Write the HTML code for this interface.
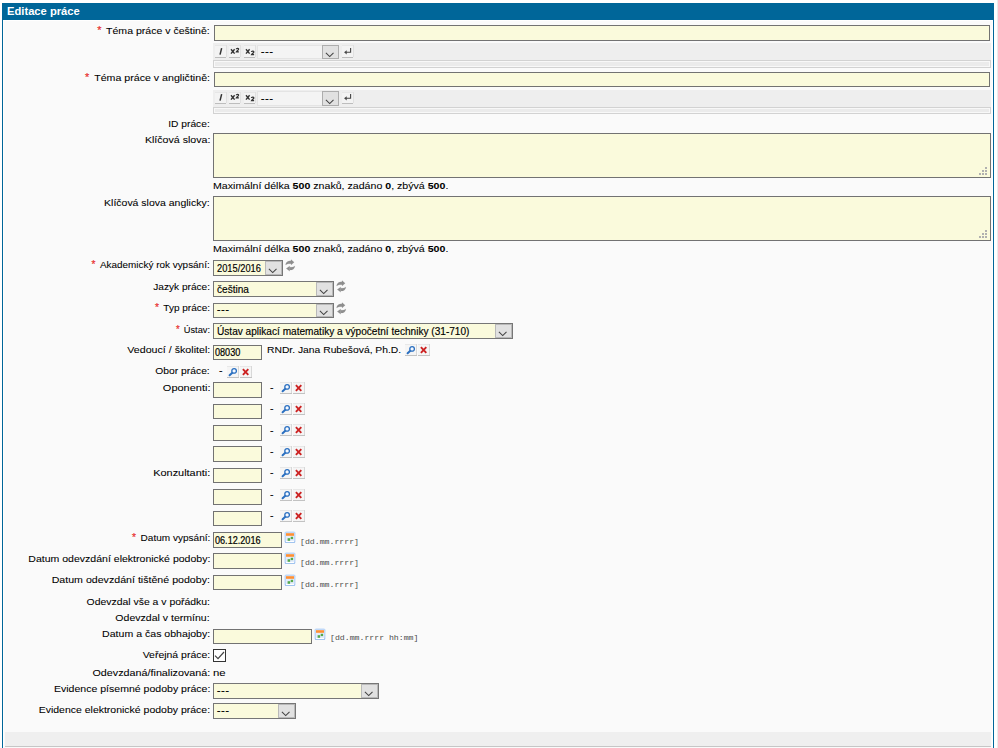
<!DOCTYPE html>
<html><head><meta charset="utf-8"><title>Editace práce</title>
<style>
html,body{margin:0;padding:0;background:#fff;overflow:hidden;}
body{width:998px;height:748px;position:relative;overflow:hidden;font-family:"Liberation Sans",sans-serif;font-size:9.8px;color:#000;}
#frame{position:absolute;left:2px;top:3px;width:990px;height:745px;border:1px solid #006699;border-bottom:none;background:#fff;}
#hd{position:absolute;left:2px;top:3px;width:992px;height:17px;background:#006699;color:#fff;font-weight:bold;font-size:11.2px;line-height:17px;}
#hd span{position:absolute;left:5px;top:0;}
#bg{position:absolute;left:4px;top:21px;width:988px;height:727px;background:#fafafa;}
#foot{position:absolute;left:5px;top:732px;width:986px;height:14px;background:#efefef;border-bottom:1px solid #c6c6c6;}
#redge{position:absolute;left:997px;top:0;width:1px;height:748px;background:#ececec;}
.lb,.t{-webkit-text-stroke:0.06px #000;}
.lb{position:absolute;left:0;width:210px;text-align:right;white-space:nowrap;line-height:13px;height:13px;}
.lx{display:inline-block;transform-origin:100% 50%;}
.rq{color:#e83030;margin-right:4.4px;font-size:10px;position:relative;top:0.4px;-webkit-text-stroke:0.2px #e83030;}
.t,.mono{position:absolute;white-space:nowrap;line-height:13px;height:13px;}
.mono{font-family:"Liberation Mono",monospace;font-size:8.2px;color:#4a4a4a;margin-top:0.5px;transform:scaleY(0.8);transform-origin:0 10px;}
.in{position:absolute;box-sizing:border-box;border:1px solid #727272;background:#fafadc;white-space:nowrap;overflow:hidden;}
.in .iv{position:absolute;left:1px;bottom:0.5px;-webkit-text-stroke:0.2px #000;font-size:10px;line-height:13px;transform:scaleX(0.91);transform-origin:0 50%;}
.sel{position:absolute;box-sizing:border-box;border:1px solid #767676;background:#fafadc;white-space:nowrap;overflow:hidden;}
.sel .sv{position:absolute;left:3px;bottom:0px;-webkit-text-stroke:0.15px #000;font-size:10.1px;line-height:13px;}
.sel .num{font-size:10px;transform:scaleX(0.93);transform-origin:0 50%;}
.sel .ar{position:absolute;right:0;top:0;bottom:0;width:17px;background:#e1e1e1;box-shadow:inset 0 0 0 1px #b9b9b9;}
.sel .ar svg{position:absolute;left:3px;bottom:1px;}
.sel .dash{letter-spacing:0.9px;margin-bottom:1px;-webkit-text-stroke:0.3px #000;}
.tsel{background:#f4f4f4;border-color:#e4e4e4;overflow:visible;}
.tsel .sv{bottom:-0.5px;}
.tsel .ar{right:-1px;top:-1px;bottom:-1px;border:1px solid #adadad;box-sizing:border-box;box-shadow:none;}
.tsel .ar svg{left:2.2px;bottom:0.5px;}
.tb{position:absolute;left:213px;width:778px;height:17px;background:#eeeeee;}
.bar{position:absolute;left:213px;width:778px;height:7px;box-sizing:border-box;border:1px solid #d2d2d2;background:#ebebeb;box-shadow:inset 0 0 0 1px #f8f8f8;}
.tbtn{position:absolute;width:11px;height:12px;background:#f3f3f3;box-shadow:inset 0 1px 0 #e6e6e6, 0 1px 0 #bdbdbd, 1px 0 0 #e0e0e0;color:#333;font-weight:bold;}
.tbtn svg{position:absolute;left:0;top:0;}
.bi{position:absolute;left:4px;top:0.3px;font-style:italic;font-size:9px;line-height:12px;}
.bx{position:absolute;left:1.5px;top:-0.2px;font-size:9.5px;line-height:12px;}
.s2{position:absolute;left:7.2px;font-size:5.6px;line-height:7px;}
.sup{top:2.5px;} .sub{top:5.3px;}
.ib{position:absolute;width:12px;height:12px;background:#f5f5f5;box-shadow:inset 0 -1px 0 #c2c2c2, inset -1px 0 0 #d8d8d8, inset 0 1px 0 #e8e8e8;}
.ib svg{position:absolute;left:0;top:0;}
.abs{position:absolute;}
.cal{position:absolute;width:11px;height:11px;box-sizing:border-box;border:1px solid #a9c8ee;background:#fdfdff;border-radius:2px;}
.cal i{position:absolute;left:1px;top:1px;width:7px;height:2px;background:#f39436;}
.cal b{position:absolute;left:2px;top:5px;width:2px;height:2px;background:#5db24d;}
.cal u{position:absolute;left:5px;top:4px;width:2px;height:2px;background:#5db24d;}
.cb{position:absolute;width:13px;height:13px;box-sizing:border-box;border:1px solid #333;background:#fff;}
.cb svg{position:absolute;left:-1px;top:-1px;}
.gd{position:absolute;width:2px;height:2px;background:#b0b0b0;}
</style></head>
<body>
<div id="frame"></div>
<div id="bg"></div>
<div id="hd"><span>Editace práce</span></div>
<div id="foot"></div>
<div id="redge"></div>
<div class="lb" style="top:24px"><span class="lx" style="transform:scaleX(1.0750)"><span class="rq">*</span>Téma práce v češtině:</span></div>
<div class="in" style="left:214px;top:25px;width:776px;height:16px"><span class="iv"></span></div>
<div class="tb" style="top:43px"></div>
<div class="tbtn" style="left:215px;top:45px;height:12px;"><svg style="" width="12" height="12" viewBox="0 0 12 12"><path d="M6.65 3.1 L5.05 9.6" stroke="#333" stroke-width="1.5" fill="none"/></svg></div>
<div class="tbtn" style="left:229px;top:45px;height:12px;"><svg style="" width="12" height="12" viewBox="0 0 12 12"><path d="M2 4.2 L5.6 8.6 M5.6 4.2 L2 8.6" stroke="#333" stroke-width="1.4" fill="none"/><path d="M7.25 4.3 C7.3 3.0 9.7 3.0 9.6 4.3 C9.5 5.3 7.7 5.9 7.3 6.9 L9.9 6.9" stroke="#333" stroke-width="1.25" fill="none"/></svg></div>
<div class="tbtn" style="left:244px;top:45px;height:12px;"><svg style="" width="12" height="12" viewBox="0 0 12 12"><path d="M2 4.2 L5.6 8.6 M5.6 4.2 L2 8.6" stroke="#333" stroke-width="1.4" fill="none"/><g transform="translate(0.2,2.8)"><path d="M7.25 4.3 C7.3 3.0 9.7 3.0 9.6 4.3 C9.5 5.3 7.7 5.9 7.3 6.9 L9.9 6.9" stroke="#333" stroke-width="1.25" fill="none"/></g></svg></div>
<div class="sel tsel" style="left:257px;top:45px;width:82px;height:14px"><span class="sv dash">---</span><span class="ar"><svg width="10" height="6" viewBox="0 0 10 6"><path d="M0.9 0.8 L4.7 4.6 L8.5 0.8" fill="none" stroke="#444" stroke-width="1.05"/></svg></span></div>
<div class="tbtn" style="left:342px;top:45px;height:12px;"><svg style="" width="12" height="12" viewBox="0 0 12 12"><path d="M8.6 3.0 V7.3 H4" fill="none" stroke="#444" stroke-width="1.1"/><path d="M2.1 7.3 L4.7 5.2 L4.7 9.4 Z" fill="#444"/></svg></div>
<div class="bar" style="top:60px;height:8px"></div>
<div class="lb" style="top:71px"><span class="lx" style="transform:scaleX(1.0859)"><span class="rq">*</span>Téma práce v angličtině:</span></div>
<div class="in" style="left:214px;top:72px;width:776px;height:15px"><span class="iv"></span></div>
<div class="tb" style="top:90px"></div>
<div class="tbtn" style="left:215px;top:92px;height:11px;"><svg style="margin-top:-0.6px;" width="12" height="12" viewBox="0 0 12 12"><path d="M6.65 3.1 L5.05 9.6" stroke="#333" stroke-width="1.5" fill="none"/></svg></div>
<div class="tbtn" style="left:229px;top:92px;height:11px;"><svg style="margin-top:-0.6px;" width="12" height="12" viewBox="0 0 12 12"><path d="M2 4.2 L5.6 8.6 M5.6 4.2 L2 8.6" stroke="#333" stroke-width="1.4" fill="none"/><path d="M7.25 4.3 C7.3 3.0 9.7 3.0 9.6 4.3 C9.5 5.3 7.7 5.9 7.3 6.9 L9.9 6.9" stroke="#333" stroke-width="1.25" fill="none"/></svg></div>
<div class="tbtn" style="left:244px;top:92px;height:11px;"><svg style="margin-top:-0.6px;" width="12" height="12" viewBox="0 0 12 12"><path d="M2 4.2 L5.6 8.6 M5.6 4.2 L2 8.6" stroke="#333" stroke-width="1.4" fill="none"/><g transform="translate(0.2,2.8)"><path d="M7.25 4.3 C7.3 3.0 9.7 3.0 9.6 4.3 C9.5 5.3 7.7 5.9 7.3 6.9 L9.9 6.9" stroke="#333" stroke-width="1.25" fill="none"/></g></svg></div>
<div class="sel tsel" style="left:257px;top:91px;width:82px;height:15px"><span class="sv dash">---</span><span class="ar"><svg width="10" height="6" viewBox="0 0 10 6"><path d="M0.9 0.8 L4.7 4.6 L8.5 0.8" fill="none" stroke="#444" stroke-width="1.05"/></svg></span></div>
<div class="tbtn" style="left:342px;top:92px;height:11px;"><svg style="margin-top:-0.6px;" width="12" height="12" viewBox="0 0 12 12"><path d="M8.6 3.0 V7.3 H4" fill="none" stroke="#444" stroke-width="1.1"/><path d="M2.1 7.3 L4.7 5.2 L4.7 9.4 Z" fill="#444"/></svg></div>
<div class="bar" style="top:107px;height:7px"></div>
<div class="lb" style="top:117px"><span class="lx" style="transform:scaleX(1.0433)">ID práce:</span></div>
<div class="lb" style="top:133px"><span class="lx" style="transform:scaleX(1.0846)">Klíčová slova:</span></div>
<div class="in ta" style="left:213px;top:133px;width:778px;height:45px"></div>
<div class="gd" style="left:979px;top:173px"></div>
<div class="gd" style="left:982px;top:173px"></div>
<div class="gd" style="left:985px;top:173px"></div>
<div class="gd" style="left:982px;top:170px"></div>
<div class="gd" style="left:985px;top:170px"></div>
<div class="gd" style="left:985px;top:167px"></div>
<div class="t" style="left:213px;top:179px;transform:scaleX(1.083);transform-origin:0 50%;">Maximální délka <b>500</b> znaků, zadáno <b>0</b>, zbývá <b>500</b>.</div>
<div class="lb" style="top:196px"><span class="lx" style="transform:scaleX(1.0703)">Klíčová slova anglicky:</span></div>
<div class="in ta" style="left:213px;top:196px;width:778px;height:45px"></div>
<div class="gd" style="left:979px;top:236px"></div>
<div class="gd" style="left:982px;top:236px"></div>
<div class="gd" style="left:985px;top:236px"></div>
<div class="gd" style="left:982px;top:233px"></div>
<div class="gd" style="left:985px;top:233px"></div>
<div class="gd" style="left:985px;top:230px"></div>
<div class="t" style="left:213px;top:242px;transform:scaleX(1.083);transform-origin:0 50%;">Maximální délka <b>500</b> znaků, zadáno <b>0</b>, zbývá <b>500</b>.</div>
<div class="lb" style="top:258px"><span class="lx" style="transform:scaleX(1.0128)"><span class="rq">*</span>Akademický rok vypsání:</span></div>
<div class="sel" style="left:213px;top:260px;width:70px;height:16px"><span class="sv num">2015/2016</span><span class="ar"><svg width="10" height="6" viewBox="0 0 10 6"><path d="M0.9 0.8 L4.7 4.6 L8.5 0.8" fill="none" stroke="#444" stroke-width="1.05"/></svg></span></div>
<svg class="abs" style="left:285px;top:259px" width="11" height="13" viewBox="0 0 11 13"><g fill="#8f8f8f" stroke="#8f8f8f" stroke-width="0.1"><path d="M6.0 0.6 L9.2 3.3 L6.0 5.9 Z"/><path d="M0.5 6.0 C0.8 3.0 3.2 1.6 6.2 1.8 L6.2 4.8 C3.8 4.6 2 5 0.5 6.0 Z"/><path d="M4.7 6.9 L1.2 9.5 L4.7 12.2 Z"/><path d="M10 6.9 C9.7 9.9 7.3 11.3 4.5 11.1 L4.5 8.1 C6.7 8.3 8.5 7.9 10 6.9 Z"/></g></svg>
<div class="lb" style="top:280px"><span class="lx" style="transform:scaleX(1.0308)">Jazyk práce:</span></div>
<div class="sel" style="left:213px;top:281px;width:121px;height:16px"><span class="sv">čeština</span><span class="ar"><svg width="10" height="6" viewBox="0 0 10 6"><path d="M0.9 0.8 L4.7 4.6 L8.5 0.8" fill="none" stroke="#444" stroke-width="1.05"/></svg></span></div>
<svg class="abs" style="left:336px;top:280px" width="11" height="13" viewBox="0 0 11 13"><g fill="#8f8f8f" stroke="#8f8f8f" stroke-width="0.1"><path d="M6.0 0.6 L9.2 3.3 L6.0 5.9 Z"/><path d="M0.5 6.0 C0.8 3.0 3.2 1.6 6.2 1.8 L6.2 4.8 C3.8 4.6 2 5 0.5 6.0 Z"/><path d="M4.7 6.9 L1.2 9.5 L4.7 12.2 Z"/><path d="M10 6.9 C9.7 9.9 7.3 11.3 4.5 11.1 L4.5 8.1 C6.7 8.3 8.5 7.9 10 6.9 Z"/></g></svg>
<div class="lb" style="top:301px"><span class="lx" style="transform:scaleX(1.0203)"><span class="rq">*</span>Typ práce:</span></div>
<div class="sel" style="left:213px;top:303px;width:121px;height:15px"><span class="sv dash">---</span><span class="ar"><svg width="10" height="6" viewBox="0 0 10 6"><path d="M0.9 0.8 L4.7 4.6 L8.5 0.8" fill="none" stroke="#444" stroke-width="1.05"/></svg></span></div>
<svg class="abs" style="left:336px;top:302px" width="11" height="13" viewBox="0 0 11 13"><g fill="#8f8f8f" stroke="#8f8f8f" stroke-width="0.1"><path d="M6.0 0.6 L9.2 3.3 L6.0 5.9 Z"/><path d="M0.5 6.0 C0.8 3.0 3.2 1.6 6.2 1.8 L6.2 4.8 C3.8 4.6 2 5 0.5 6.0 Z"/><path d="M4.7 6.9 L1.2 9.5 L4.7 12.2 Z"/><path d="M10 6.9 C9.7 9.9 7.3 11.3 4.5 11.1 L4.5 8.1 C6.7 8.3 8.5 7.9 10 6.9 Z"/></g></svg>
<div class="lb" style="top:323px"><span class="lx" style="transform:scaleX(0.9478)"><span class="rq">*</span>Ústav:</span></div>
<div class="sel" style="left:213px;top:323px;width:300px;height:16px"><span class="sv">Ústav aplikací matematiky a výpočetní techniky (31-710)</span><span class="ar"><svg width="10" height="6" viewBox="0 0 10 6"><path d="M0.9 0.8 L4.7 4.6 L8.5 0.8" fill="none" stroke="#444" stroke-width="1.05"/></svg></span></div>
<div class="lb" style="top:343px"><span class="lx" style="transform:scaleX(1.0878)">Vedoucí / školitel:</span></div>
<div class="in" style="left:213px;top:345px;width:49px;height:15px"><span class="iv">08030</span></div>
<div class="t" style="left:267px;top:343px;transform:scaleX(1.053);transform-origin:0 50%;">RNDr. Jana Rubešová, Ph.D.</div>
<div class="ib" style="left:405px;top:344px"><svg width="12" height="12" viewBox="0 0 12 12"><path d="M5.6 6.4 L2.6 9.2" stroke="#2a6fc0" stroke-width="2" stroke-linecap="round"/><circle cx="7.1" cy="4.9" r="2.3" fill="#f4f8ff" stroke="#2a6fc0" stroke-width="1.3"/></svg></div>
<div class="ib" style="left:418px;top:344px"><svg width="12" height="12" viewBox="0 0 12 12"><path d="M2.9 3.2 L8.3 8.8 M8.3 3.2 L2.9 8.8" stroke="#cc2222" stroke-width="1.9"/></svg></div>
<div class="lb" style="top:364px"><span class="lx" style="transform:scaleX(1.0517)">Obor práce:</span></div>
<div class="t" style="left:219px;top:364px;transform:scaleX(1.075);transform-origin:0 50%;">-</div>
<div class="ib" style="left:227px;top:366px"><svg width="12" height="12" viewBox="0 0 12 12"><path d="M5.6 6.4 L2.6 9.2" stroke="#2a6fc0" stroke-width="2" stroke-linecap="round"/><circle cx="7.1" cy="4.9" r="2.3" fill="#f4f8ff" stroke="#2a6fc0" stroke-width="1.3"/></svg></div>
<div class="ib" style="left:240px;top:366px"><svg width="12" height="12" viewBox="0 0 12 12"><path d="M2.9 3.2 L8.3 8.8 M8.3 3.2 L2.9 8.8" stroke="#cc2222" stroke-width="1.9"/></svg></div>
<div class="lb" style="top:381px"><span class="lx" style="transform:scaleX(1.1208)">Oponenti:</span></div>
<div class="in" style="left:213px;top:382px;width:49px;height:16px"><span class="iv"></span></div>
<div class="t" style="left:270px;top:381px;transform:scaleX(1.075);transform-origin:0 50%;">-</div>
<div class="ib" style="left:280px;top:382px"><svg width="12" height="12" viewBox="0 0 12 12"><path d="M5.6 6.4 L2.6 9.2" stroke="#2a6fc0" stroke-width="2" stroke-linecap="round"/><circle cx="7.1" cy="4.9" r="2.3" fill="#f4f8ff" stroke="#2a6fc0" stroke-width="1.3"/></svg></div>
<div class="ib" style="left:293px;top:382px"><svg width="12" height="12" viewBox="0 0 12 12"><path d="M2.9 3.2 L8.3 8.8 M8.3 3.2 L2.9 8.8" stroke="#cc2222" stroke-width="1.9"/></svg></div>
<div class="in" style="left:213px;top:404px;width:49px;height:15px"><span class="iv"></span></div>
<div class="t" style="left:270px;top:402px;transform:scaleX(1.075);transform-origin:0 50%;">-</div>
<div class="ib" style="left:280px;top:403px"><svg width="12" height="12" viewBox="0 0 12 12"><path d="M5.6 6.4 L2.6 9.2" stroke="#2a6fc0" stroke-width="2" stroke-linecap="round"/><circle cx="7.1" cy="4.9" r="2.3" fill="#f4f8ff" stroke="#2a6fc0" stroke-width="1.3"/></svg></div>
<div class="ib" style="left:293px;top:403px"><svg width="12" height="12" viewBox="0 0 12 12"><path d="M2.9 3.2 L8.3 8.8 M8.3 3.2 L2.9 8.8" stroke="#cc2222" stroke-width="1.9"/></svg></div>
<div class="in" style="left:213px;top:425px;width:49px;height:16px"><span class="iv"></span></div>
<div class="t" style="left:270px;top:424px;transform:scaleX(1.075);transform-origin:0 50%;">-</div>
<div class="ib" style="left:280px;top:424px"><svg width="12" height="12" viewBox="0 0 12 12"><path d="M5.6 6.4 L2.6 9.2" stroke="#2a6fc0" stroke-width="2" stroke-linecap="round"/><circle cx="7.1" cy="4.9" r="2.3" fill="#f4f8ff" stroke="#2a6fc0" stroke-width="1.3"/></svg></div>
<div class="ib" style="left:293px;top:424px"><svg width="12" height="12" viewBox="0 0 12 12"><path d="M2.9 3.2 L8.3 8.8 M8.3 3.2 L2.9 8.8" stroke="#cc2222" stroke-width="1.9"/></svg></div>
<div class="in" style="left:213px;top:446px;width:49px;height:16px"><span class="iv"></span></div>
<div class="t" style="left:270px;top:445px;transform:scaleX(1.075);transform-origin:0 50%;">-</div>
<div class="ib" style="left:280px;top:446px"><svg width="12" height="12" viewBox="0 0 12 12"><path d="M5.6 6.4 L2.6 9.2" stroke="#2a6fc0" stroke-width="2" stroke-linecap="round"/><circle cx="7.1" cy="4.9" r="2.3" fill="#f4f8ff" stroke="#2a6fc0" stroke-width="1.3"/></svg></div>
<div class="ib" style="left:293px;top:446px"><svg width="12" height="12" viewBox="0 0 12 12"><path d="M2.9 3.2 L8.3 8.8 M8.3 3.2 L2.9 8.8" stroke="#cc2222" stroke-width="1.9"/></svg></div>
<div class="lb" style="top:466px"><span class="lx" style="transform:scaleX(1.1112)">Konzultanti:</span></div>
<div class="in" style="left:213px;top:468px;width:49px;height:15px"><span class="iv"></span></div>
<div class="t" style="left:270px;top:466px;transform:scaleX(1.075);transform-origin:0 50%;">-</div>
<div class="ib" style="left:280px;top:467px"><svg width="12" height="12" viewBox="0 0 12 12"><path d="M5.6 6.4 L2.6 9.2" stroke="#2a6fc0" stroke-width="2" stroke-linecap="round"/><circle cx="7.1" cy="4.9" r="2.3" fill="#f4f8ff" stroke="#2a6fc0" stroke-width="1.3"/></svg></div>
<div class="ib" style="left:293px;top:467px"><svg width="12" height="12" viewBox="0 0 12 12"><path d="M2.9 3.2 L8.3 8.8 M8.3 3.2 L2.9 8.8" stroke="#cc2222" stroke-width="1.9"/></svg></div>
<div class="in" style="left:213px;top:489px;width:49px;height:16px"><span class="iv"></span></div>
<div class="t" style="left:270px;top:488px;transform:scaleX(1.075);transform-origin:0 50%;">-</div>
<div class="ib" style="left:280px;top:489px"><svg width="12" height="12" viewBox="0 0 12 12"><path d="M5.6 6.4 L2.6 9.2" stroke="#2a6fc0" stroke-width="2" stroke-linecap="round"/><circle cx="7.1" cy="4.9" r="2.3" fill="#f4f8ff" stroke="#2a6fc0" stroke-width="1.3"/></svg></div>
<div class="ib" style="left:293px;top:489px"><svg width="12" height="12" viewBox="0 0 12 12"><path d="M2.9 3.2 L8.3 8.8 M8.3 3.2 L2.9 8.8" stroke="#cc2222" stroke-width="1.9"/></svg></div>
<div class="in" style="left:213px;top:511px;width:49px;height:15px"><span class="iv"></span></div>
<div class="t" style="left:270px;top:509px;transform:scaleX(1.075);transform-origin:0 50%;">-</div>
<div class="ib" style="left:280px;top:510px"><svg width="12" height="12" viewBox="0 0 12 12"><path d="M5.6 6.4 L2.6 9.2" stroke="#2a6fc0" stroke-width="2" stroke-linecap="round"/><circle cx="7.1" cy="4.9" r="2.3" fill="#f4f8ff" stroke="#2a6fc0" stroke-width="1.3"/></svg></div>
<div class="ib" style="left:293px;top:510px"><svg width="12" height="12" viewBox="0 0 12 12"><path d="M2.9 3.2 L8.3 8.8 M8.3 3.2 L2.9 8.8" stroke="#cc2222" stroke-width="1.9"/></svg></div>
<div class="lb" style="top:531px"><span class="lx" style="transform:scaleX(1.0249)"><span class="rq">*</span>Datum vypsání:</span></div>
<div class="in" style="left:213px;top:532px;width:69px;height:16px"><span class="iv">06.12.2016</span></div>
<svg class="abs" style="left:284px;top:531px" width="12" height="12" viewBox="0 0 12 12"><rect x="0.5" y="0.6" width="11" height="11.2" rx="1.6" fill="#bfd8f8"/><rect x="1" y="10.6" width="10" height="1.2" rx="0.6" fill="#92baec"/><rect x="2" y="2" width="8" height="8.8" fill="#e4ecfb"/><rect x="2" y="2.2" width="8" height="2.6" fill="#ff8f33"/><rect x="3.6" y="7.2" width="2.5" height="2.6" fill="#55a94a"/><rect x="6.7" y="5.8" width="2.4" height="2.3" fill="#55a94a"/><rect x="2" y="10" width="8" height="1" fill="#ffffff"/></svg>
<div class="mono" style="left:300px;top:534px;">[dd.mm.rrrr]</div>
<div class="lb" style="top:552px"><span class="lx" style="transform:scaleX(1.0750)">Datum odevzdání elektronické podoby:</span></div>
<div class="in" style="left:213px;top:553px;width:69px;height:16px"><span class="iv"></span></div>
<svg class="abs" style="left:284px;top:552px" width="12" height="12" viewBox="0 0 12 12"><rect x="0.5" y="0.6" width="11" height="11.2" rx="1.6" fill="#bfd8f8"/><rect x="1" y="10.6" width="10" height="1.2" rx="0.6" fill="#92baec"/><rect x="2" y="2" width="8" height="8.8" fill="#e4ecfb"/><rect x="2" y="2.2" width="8" height="2.6" fill="#ff8f33"/><rect x="3.6" y="7.2" width="2.5" height="2.6" fill="#55a94a"/><rect x="6.7" y="5.8" width="2.4" height="2.3" fill="#55a94a"/><rect x="2" y="10" width="8" height="1" fill="#ffffff"/></svg>
<div class="mono" style="left:300px;top:555px;">[dd.mm.rrrr]</div>
<div class="lb" style="top:573px"><span class="lx" style="transform:scaleX(1.0847)">Datum odevzdání tištěné podoby:</span></div>
<div class="in" style="left:213px;top:575px;width:69px;height:15px"><span class="iv"></span></div>
<svg class="abs" style="left:284px;top:574px" width="12" height="12" viewBox="0 0 12 12"><rect x="0.5" y="0.6" width="11" height="11.2" rx="1.6" fill="#bfd8f8"/><rect x="1" y="10.6" width="10" height="1.2" rx="0.6" fill="#92baec"/><rect x="2" y="2" width="8" height="8.8" fill="#e4ecfb"/><rect x="2" y="2.2" width="8" height="2.6" fill="#ff8f33"/><rect x="3.6" y="7.2" width="2.5" height="2.6" fill="#55a94a"/><rect x="6.7" y="5.8" width="2.4" height="2.3" fill="#55a94a"/><rect x="2" y="10" width="8" height="1" fill="#ffffff"/></svg>
<div class="mono" style="left:300px;top:577px;">[dd.mm.rrrr]</div>
<div class="lb" style="top:595px"><span class="lx" style="transform:scaleX(1.0645)">Odevzdal vše a v pořádku:</span></div>
<div class="lb" style="top:611px"><span class="lx" style="transform:scaleX(1.0759)">Odevzdal v termínu:</span></div>
<div class="lb" style="top:627px"><span class="lx" style="transform:scaleX(1.0788)">Datum a čas obhajoby:</span></div>
<div class="in" style="left:213px;top:629px;width:99px;height:15px"><span class="iv"></span></div>
<svg class="abs" style="left:314px;top:628px" width="12" height="12" viewBox="0 0 12 12"><rect x="0.5" y="0.6" width="11" height="11.2" rx="1.6" fill="#bfd8f8"/><rect x="1" y="10.6" width="10" height="1.2" rx="0.6" fill="#92baec"/><rect x="2" y="2" width="8" height="8.8" fill="#e4ecfb"/><rect x="2" y="2.2" width="8" height="2.6" fill="#ff8f33"/><rect x="3.6" y="7.2" width="2.5" height="2.6" fill="#55a94a"/><rect x="6.7" y="5.8" width="2.4" height="2.3" fill="#55a94a"/><rect x="2" y="10" width="8" height="1" fill="#ffffff"/></svg>
<div class="mono" style="left:330px;top:630px;">[dd.mm.rrrr hh:mm]</div>
<div class="lb" style="top:648px"><span class="lx" style="transform:scaleX(1.0679)">Veřejná práce:</span></div>
<div class="cb" style="left:213px;top:649px"><svg width="13" height="13" viewBox="0 0 13 13"><path d="M2 6.6 L5 9.6 L11 3" fill="none" stroke="#444" stroke-width="1.2"/></svg></div>
<div class="lb" style="top:666px"><span class="lx" style="transform:scaleX(1.0979)">Odevzdaná/finalizovaná:</span></div>
<div class="t" style="left:213px;top:666px;transform:scaleX(1.16);transform-origin:0 50%;">ne</div>
<div class="lb" style="top:682px"><span class="lx" style="transform:scaleX(1.0764)">Evidence písemné podoby práce:</span></div>
<div class="sel" style="left:213px;top:683px;width:166px;height:16px"><span class="sv dash">---</span><span class="ar"><svg width="10" height="6" viewBox="0 0 10 6"><path d="M0.9 0.8 L4.7 4.6 L8.5 0.8" fill="none" stroke="#444" stroke-width="1.05"/></svg></span></div>
<div class="lb" style="top:703px"><span class="lx" style="transform:scaleX(1.0710)">Evidence elektronické podoby práce:</span></div>
<div class="sel" style="left:213px;top:703px;width:83px;height:16px"><span class="sv dash">---</span><span class="ar"><svg width="10" height="6" viewBox="0 0 10 6"><path d="M0.9 0.8 L4.7 4.6 L8.5 0.8" fill="none" stroke="#444" stroke-width="1.05"/></svg></span></div>
</body></html>
